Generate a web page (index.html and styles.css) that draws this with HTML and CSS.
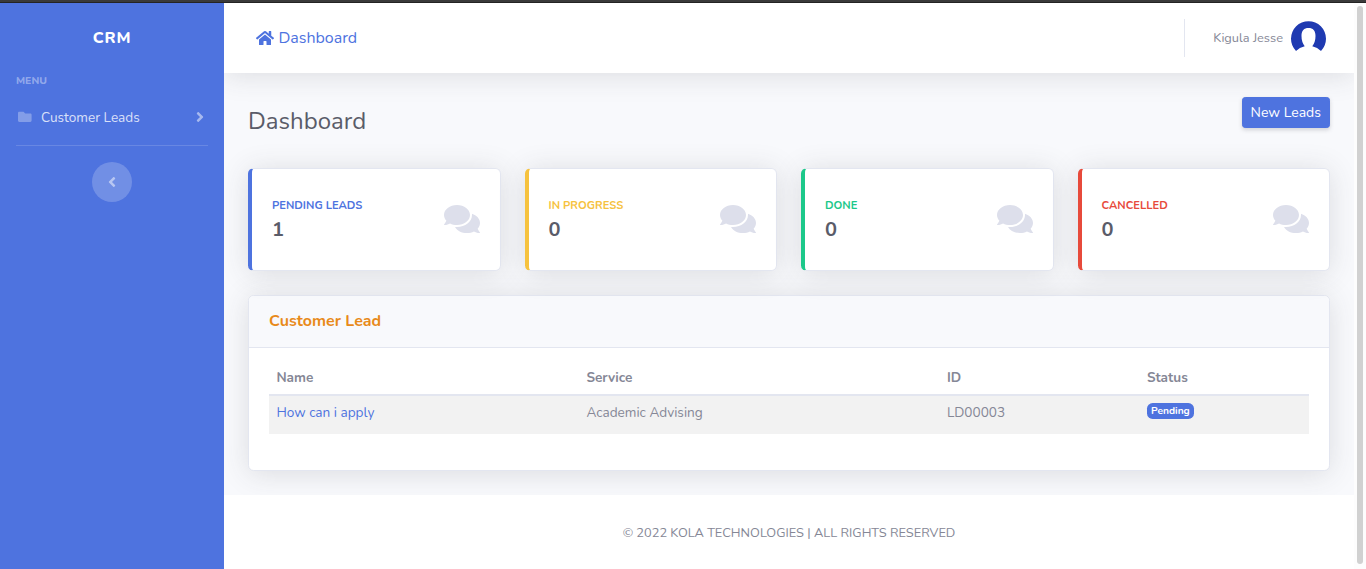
FILE: index.html
```html
<!DOCTYPE html>
<html lang="en">
<head>
<meta charset="utf-8">
<title>CRM Dashboard</title>
<link rel="stylesheet" href="styles.css">
</head>
<body>
<svg class="sprite" aria-hidden="true">
  <symbol id="comments" viewBox="0 0 576 512"><path d="M416 192c0-88.4-93.1-160-208-160S0 103.6 0 192c0 34.3 14.1 65.9 38 92-13.4 30.2-35.5 54.2-35.8 54.5-2.2 2.3-2.8 5.7-1.5 8.7S4.8 352 8 352c36.6 0 66.9-12.3 88.7-25 32.2 15.7 70.3 25 111.3 25 114.9 0 208-71.6 208-160zm122 220c23.9-26 38-57.7 38-92 0-66.9-53.5-124.2-129.3-148.1.9 6.6 1.3 13.3 1.3 20.1 0 105.9-107.7 192-240 192-10.8 0-21.3-.8-31.7-1.9C207.8 439.6 281.8 480 368 480c41 0 79.1-9.2 111.3-25 21.8 12.7 52.1 25 88.7 25 3.2 0 6.1-1.9 7.3-4.8 1.3-2.9.7-6.3-1.5-8.7-.3-.3-22.4-24.2-35.8-54.5z"/></symbol>
</svg>
<div class="window-edge"></div>
<div class="app">
  <nav class="sidebar">
    <a class="brand">CRM</a>
    <div class="sidebar-heading">Menu</div>
    <a class="nav-link">
      <svg class="nav-icon" viewBox="0 0 512 512"><path d="M464 128H272l-64-64H48C21.49 64 0 85.49 0 112v288c0 26.51 21.49 48 48 48h416c26.51 0 48-21.49 48-48V176c0-26.51-21.49-48-48-48z"/></svg>
      <span>Customer Leads</span>
      <svg class="nav-arrow" viewBox="0 0 256 512"><path d="M224.3 273l-136 136c-9.4 9.4-24.6 9.4-33.9 0l-22.6-22.6c-9.4-9.4-9.4-24.6 0-33.9l96.4-96.4-96.4-96.4c-9.4-9.4-9.4-24.6 0-33.9L54.3 103c9.4-9.4 24.6-9.4 33.9 0l136 136c9.5 9.4 9.5 24.6.1 34z"/></svg>
    </a>
    <hr class="sidebar-divider">
    <button class="sidebar-toggle" aria-label="Collapse">
      <svg viewBox="0 0 256 512"><path d="M31.7 239l136-136c9.4-9.4 24.6-9.4 33.9 0l22.6 22.6c9.4 9.4 9.4 24.6 0 33.9L127.9 256l96.4 96.4c9.4 9.4 9.4 24.6 0 33.9L201.7 409c-9.4 9.4-24.6 9.4-33.9 0l-136-136c-9.5-9.4-9.5-24.6-.1-34z"/></svg>
    </button>
  </nav>
  <div class="content">
    <header class="topbar">
      <a class="home-link">
        <svg viewBox="0 0 576 512"><path d="M280.37 148.26L96 300.11V464a16 16 0 0 0 16 16l112.06-.29a16 16 0 0 0 15.92-16V368a16 16 0 0 1 16-16h64a16 16 0 0 1 16 16v95.64a16 16 0 0 0 16 16.05L464 480a16 16 0 0 0 16-16V300L295.67 148.26a12.19 12.19 0 0 0-15.3 0zM571.6 251.47L488 182.56V44.05a12 12 0 0 0-12-12h-56a12 12 0 0 0-12 12v72.61L318.47 43a48 48 0 0 0-61 0L4.34 251.47a12 12 0 0 0-1.6 16.9l25.5 31A12 12 0 0 0 45.15 301l235.22-193.74a12.19 12.19 0 0 1 15.3 0L530.9 301a12 12 0 0 0 16.9-1.6l25.5-31a12 12 0 0 0-1.7-16.93z"/></svg>
        <span>Dashboard</span>
      </a>
      <div class="topbar-divider"></div>
      <span class="user-name">Kigula Jesse</span>
      <svg class="avatar" viewBox="0 0 35 35">
        <path fill="#1f3ab1" d="M5 30A17.5 17.5 0 1 1 30 30Q26.500 26.500 21.300 25.200Q24.500 21 24.500 15C24.500 9.500 22 7 17.500 7S10.500 9.500 10.500 15Q10.500 21 13.700 25.200Q8.500 26.500 5 30Z"/>
      </svg>
    </header>
    <main class="main">
      <div class="page-head">
        <h1>Dashboard</h1>
        <a class="btn">New Leads</a>
      </div>
      <div class="stats">
        <section class="stat stat-primary"><div><div class="stat-label">Pending Leads</div><div class="stat-value">1</div></div><svg><use href="#comments"/></svg></section>
        <section class="stat stat-warning"><div><div class="stat-label">In Progress</div><div class="stat-value">0</div></div><svg><use href="#comments"/></svg></section>
        <section class="stat stat-success"><div><div class="stat-label">Done</div><div class="stat-value">0</div></div><svg><use href="#comments"/></svg></section>
        <section class="stat stat-danger"><div><div class="stat-label">Cancelled</div><div class="stat-value">0</div></div><svg><use href="#comments"/></svg></section>
      </div>
      <section class="card">
        <h2 class="card-header">Customer Lead</h2>
        <div class="card-body">
          <table class="leads">
            <colgroup><col class="col-name"><col class="col-service"><col class="col-id"><col></colgroup>
            <thead><tr><th>Name</th><th>Service</th><th>ID</th><th>Status</th></tr></thead>
            <tbody><tr><td><a>How can i apply</a></td><td>Academic Advising</td><td>LD00003</td><td><span class="badge">Pending</span></td></tr></tbody>
          </table>
        </div>
      </section>
    </main>
    <footer class="footer">© 2022 KOLA TECHNOLOGIES | ALL RIGHTS RESERVED</footer>
  </div>
  <div class="scrollbar"><div class="scroll-thumb"></div></div>
</div>
</body>
</html>
```
FILE: styles.css
```css
* { box-sizing: border-box; }

body {
  margin: 0;
  height: 569px;
  display: flex;
  flex-direction: column;
  overflow: hidden;
  background: #fff;
  color: #858796;
  font: 400 16px/1.5 Nunito, Lato, "Open Sans", sans-serif;
}

h1, h2 { margin: 0; }
svg { fill: currentColor; }
.sprite { display: none; }

.window-edge {
  height: 3px;
  flex: none;
  background: #3a3a3a;
  border-bottom: 1px solid #242424;
}

.app { flex: 1; display: flex; min-height: 0; }

/* Sidebar */
.sidebar {
  width: 224px;
  flex: none;
  padding: 0 16px;
  display: flex;
  flex-direction: column;
  background: #4e73df;
}
.brand {
  height: 70px;
  display: flex;
  align-items: center;
  justify-content: center;
  color: #fff;
  font-weight: 800;
  letter-spacing: 0.8px;
}
.sidebar-heading {
  color: rgba(255, 255, 255, 0.4);
  font-size: 10.4px;
  font-weight: 800;
  text-transform: uppercase;
}
.nav-link {
  display: flex;
  align-items: center;
  height: 56px;
  padding: 0 4px 0 2px;
  color: rgba(255, 255, 255, 0.8);
  font-size: 13.6px;
}
.nav-link span { padding-top: 3px; }
.nav-icon { width: 13.6px; height: 13.6px; margin-right: 9.4px; color: rgba(255, 255, 255, 0.3); }
.nav-arrow { width: 8px; height: 16px; margin-left: auto; color: rgba(255, 255, 255, 0.5); }
.sidebar-divider { width: 100%; margin: 0 0 16px; border: 0; border-top: 1px solid rgba(255, 255, 255, 0.15); }
.sidebar-toggle {
  width: 40px;
  height: 40px;
  align-self: center;
  display: flex;
  align-items: center;
  justify-content: center;
  padding: 0;
  border: 0;
  border-radius: 50%;
  background: rgba(255, 255, 255, 0.2);
  color: rgba(255, 255, 255, 0.5);
}
.sidebar-toggle svg { width: 8px; height: 16px; }

/* Content column */
.content { flex: 1; min-width: 0; display: flex; flex-direction: column; background: #f8f9fc; overflow: hidden; }

.topbar {
  height: 70px;
  flex: none;
  display: flex;
  align-items: center;
  padding: 0 28px 0 32px;
  background: #fff;
  box-shadow: 0 2.4px 28px rgba(58, 59, 69, 0.15);
}
.home-link { display: flex; align-items: center; gap: 4.4px; color: #4e73df; }
.home-link svg { width: 18px; height: 16px; margin-top: -1px; }
.topbar-divider { width: 1px; height: 38px; margin: 0 28px 0 auto; background: #e3e6f0; }
.user-name { font-size: 12.8px; margin-right: 8px; padding-top: 2px; }
.avatar { width: 35px; height: 35px; }

.main { flex: 1; padding: 24px 24px 0; }
.page-head { display: flex; justify-content: space-between; align-items: flex-start; height: 71px; }
.page-head h1 { padding-top: 10px; color: #5a5c69; font-size: 24px; font-weight: 400; line-height: 28.8px; }
.btn {
  padding: 4px 8px;
  border: 1px solid #4e73df;
  border-radius: 3.2px;
  background: #4e73df;
  color: #fff;
  font-size: 14px;
  line-height: 21px;
  box-shadow: 0 2px 4px rgba(58, 59, 69, 0.2);
}

.stats { display: grid; grid-template-columns: repeat(4, 1fr); gap: 24px; margin-bottom: 24px; }
.stat {
  height: 103px;
  display: flex;
  align-items: center;
  justify-content: space-between;
  padding: 0 20px;
  background: #fff;
  border: 1px solid #e3e6f0;
  border-left: 4px solid currentColor;
  border-radius: 5.6px;
  box-shadow: 0 2.4px 28px rgba(58, 59, 69, 0.15);
}
.stat-primary { color: #4e73df; }
.stat-warning { color: #f6c23e; }
.stat-success { color: #1cc88a; }
.stat-danger { color: #e74a3b; }
.stat-label { padding-top: 1px; margin-bottom: 3px; font-size: 11.2px; font-weight: 700; text-transform: uppercase; }
.stat-value { color: #5a5c69; font-size: 20px; font-weight: 700; line-height: 1.2; }
.stat svg { width: 36px; height: 32px; margin-bottom: 2px; color: #dddfeb; }

.card {
  height: 176px;
  background: #fff;
  border: 1px solid #e3e6f0;
  border-radius: 5.6px;
  box-shadow: 0 2.4px 28px rgba(58, 59, 69, 0.15);
}
.card-header {
  height: 52px;
  padding: 16px 20px;
  background: #f8f9fc;
  border-bottom: 1px solid #e3e6f0;
  border-radius: 5px 5px 0 0;
  color: #e88a1a;
  font-size: 16px;
  font-weight: 700;
  line-height: 19.2px;
}
.card-body { padding: 12px 20px; }

.leads { width: 100%; table-layout: fixed; border-collapse: collapse; font-size: 13.6px; line-height: 20.4px; }
.col-name { width: 310px; }
.col-service { width: 360.5px; }
.col-id { width: 200px; }
.leads th, .leads td { padding: 7px 7.4px; text-align: left; vertical-align: top; }
.leads th { height: 35px; padding: 8px 7.4px 6px; border-bottom: 2px solid #e3e6f0; font-weight: 700; }
.leads td { height: 39px; background: #f2f2f2; }
.leads a { color: #4e73df; }
.badge {
  display: block;
  width: fit-content;
  padding: 2.5px 4.2px;
  border-radius: 5.6px;
  background: #4e73df;
  color: #fff;
  font-size: 10.2px;
  font-weight: 700;
  line-height: 11px;
}

.footer {
  height: 74px;
  flex: none;
  display: flex;
  align-items: center;
  justify-content: center;
  padding-top: 3px;
  background: #fff;
  font-size: 12.8px;
}

/* Scroll track */
.scrollbar { width: 12px; flex: none; padding: 3px 3px 5px; background: #fdfdfd; }
.scroll-thumb { width: 6px; height: 558px; border-radius: 3px; background: #d1d1d1; }
```
